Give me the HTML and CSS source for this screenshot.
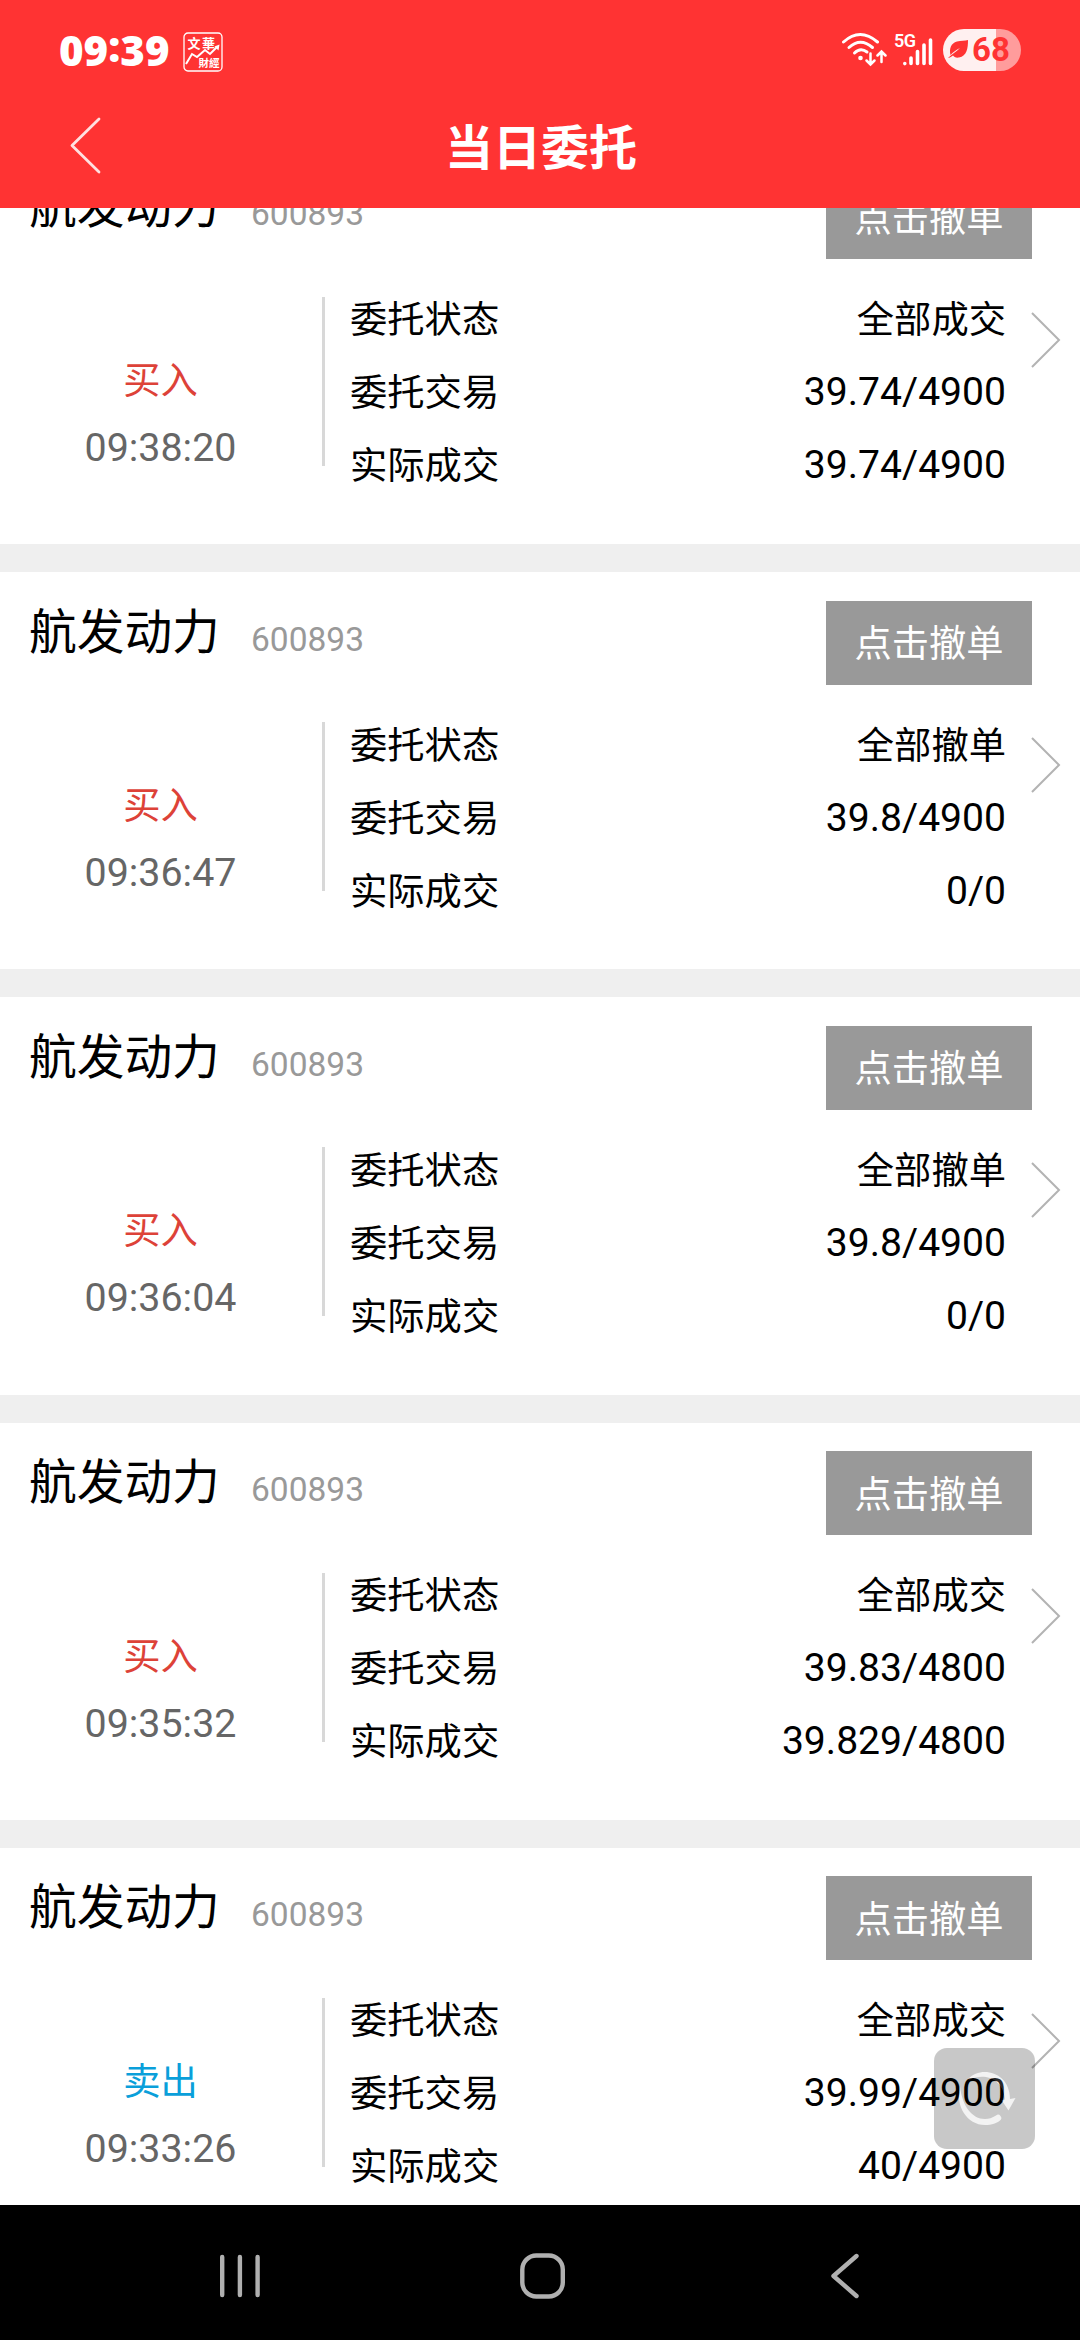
FILE: index.html
```html
<!DOCTYPE html>
<html lang="zh-CN">
<head>
  <meta charset="UTF-8">
  <title>当日委托</title>
  <link rel="stylesheet" href="styles.css">
</head>
<body>
  <header>
    <div class="status-bar">
      <span class="clock">09<span class="colon">:</span>39</span>
      <svg class="app-icon" width="40" height="40" viewBox="0 0 40 40">
        <rect x="1" y="1" width="38" height="38" rx="4" fill="none" stroke="#fff" stroke-width="1.3"/>
        <text x="4.5" y="15.5" font-size="13">文</text>
        <text x="19" y="15.5" font-size="13">華</text>
        <text x="15.5" y="34.5" font-size="10.5">財經</text>
        <path d="M3 32 L9 22 L14 25 L22 18 L27 22 L34 15" fill="none" stroke="#fff" stroke-width="2"/>
        <path d="M36.5 12.500 L31.500 14.500 L35.500 18.500 Z" fill="#fff"/>
      </svg>
      <div class="status-right">
        <svg class="wifi" width="46" height="36" viewBox="0 0 46 36" fill="none" stroke="#fff" stroke-linecap="round">
          <path d="M2.5 10 Q19 -5 36.5 10" stroke-width="3"/>
          <path d="M8 15.5 Q19.5 5 31.5 15.5" stroke-width="3"/>
          <path d="M13.5 21 Q19.5 15 26 20" stroke-width="3"/>
          <circle cx="19.5" cy="26" r="2.3" fill="#fff" stroke="none"/>
          <path d="M29.5 21.5 V32 M25.5 28.5 L29.5 32.5 L33.5 28.5" stroke-width="2.5"/>
          <path d="M40.5 30 V20 M36.5 23.5 L40.5 19.5 L44.5 23.5" stroke-width="2.5"/>
        </svg>
        <svg class="signal" width="40" height="36" viewBox="0 0 40 36" fill="none" stroke="#fff" stroke-width="3.6" stroke-linecap="round">
          <text x="0" y="14.5" font-size="18" stroke="none" textLength="22">5G</text>
          <path d="M10.8 31.5 V31.6 M17 26 V31.5 M23.5 19.5 V31.5 M30 13 V31.5 M36.5 8 V31.5"/>
        </svg>
        <div class="battery">
          <svg width="22" height="22" viewBox="0 0 22 22">
            <path d="M21 1 C21 9 20 17 12 18.500 C9 19 7 18 6 16.500 C4 18 2.500 18.800 1 19 C5 15 9 13 13 9 C9 11 6 13 3.500 16 C2 10 4 4 10 2.500 C14 1.500 18 2 21 1 Z" fill="#f33"/>
          </svg>
          <span>68</span>
        </div>
      </div>
    </div>
    <div class="title-bar">
      <svg class="back" width="34" height="58" viewBox="0 0 34 58">
        <path d="M31 2 L4 28.5 L31 55" fill="none" stroke="#fff" stroke-width="2.8" stroke-linecap="round" stroke-linejoin="round" opacity="0.85"/>
      </svg>
      <h1>当日委托</h1>
    </div>
  </header>

  <main>
    <section class="order">
      <div class="order-head">
        <h2>航发动力</h2>
        <span class="code">600893</span>
        <button>点击撤单</button>
      </div>
      <div class="order-body">
        <div class="side">
          <p class="buy">买入</p>
          <p class="time">09:38:20</p>
        </div>
        <dl>
          <dt>委托状态</dt><dd class="cn">全部成交</dd>
          <dt>委托交易</dt><dd>39.74/4900</dd>
          <dt>实际成交</dt><dd>39.74/4900</dd>
        </dl>
        <svg class="more" width="32" height="58" viewBox="0 0 32 58"><path d="M2 2 L29 29 L2 56"/></svg>
      </div>
    </section>

    <section class="order">
      <div class="order-head">
        <h2>航发动力</h2>
        <span class="code">600893</span>
        <button>点击撤单</button>
      </div>
      <div class="order-body">
        <div class="side">
          <p class="buy">买入</p>
          <p class="time">09:36:47</p>
        </div>
        <dl>
          <dt>委托状态</dt><dd class="cn">全部撤单</dd>
          <dt>委托交易</dt><dd>39.8/4900</dd>
          <dt>实际成交</dt><dd>0/0</dd>
        </dl>
        <svg class="more" width="32" height="58" viewBox="0 0 32 58"><path d="M2 2 L29 29 L2 56"/></svg>
      </div>
    </section>

    <section class="order">
      <div class="order-head">
        <h2>航发动力</h2>
        <span class="code">600893</span>
        <button>点击撤单</button>
      </div>
      <div class="order-body">
        <div class="side">
          <p class="buy">买入</p>
          <p class="time">09:36:04</p>
        </div>
        <dl>
          <dt>委托状态</dt><dd class="cn">全部撤单</dd>
          <dt>委托交易</dt><dd>39.8/4900</dd>
          <dt>实际成交</dt><dd>0/0</dd>
        </dl>
        <svg class="more" width="32" height="58" viewBox="0 0 32 58"><path d="M2 2 L29 29 L2 56"/></svg>
      </div>
    </section>

    <section class="order">
      <div class="order-head">
        <h2>航发动力</h2>
        <span class="code">600893</span>
        <button>点击撤单</button>
      </div>
      <div class="order-body">
        <div class="side">
          <p class="buy">买入</p>
          <p class="time">09:35:32</p>
        </div>
        <dl>
          <dt>委托状态</dt><dd class="cn">全部成交</dd>
          <dt>委托交易</dt><dd>39.83/4800</dd>
          <dt>实际成交</dt><dd>39.829/4800</dd>
        </dl>
        <svg class="more" width="32" height="58" viewBox="0 0 32 58"><path d="M2 2 L29 29 L2 56"/></svg>
      </div>
    </section>

    <section class="order">
      <div class="order-head">
        <h2>航发动力</h2>
        <span class="code">600893</span>
        <button>点击撤单</button>
      </div>
      <div class="order-body">
        <div class="side">
          <p class="sell">卖出</p>
          <p class="time">09:33:26</p>
        </div>
        <dl>
          <dt>委托状态</dt><dd class="cn">全部成交</dd>
          <dt>委托交易</dt><dd>39.99/4900</dd>
          <dt>实际成交</dt><dd>40/4900</dd>
        </dl>
        <svg class="more" width="32" height="58" viewBox="0 0 32 58"><path d="M2 2 L29 29 L2 56"/></svg>
      </div>
    </section>

    <div class="refresh">
      <svg width="101" height="101" viewBox="0 0 101 101" fill="#c8c8c8">
        <path d="M26 38 C21 58 33 77 51 77 C58 77 63 75 66 72.500 A3.200 3.200 0 0 0 62 67.500 C58 70 55 71 51 71 C38 71 28 58 26 38 Z"/>
        <path d="M34 31 C47 17 76 24 76 51 L81.500 50 L74.500 62.500 L67.500 52 L71 51.500 C69 30 50 25 36 31.500 A1.500 1.500 0 0 1 34 31 Z"/>
      </svg>
    </div>
  </main>

  <nav>
    <svg width="44" height="50" viewBox="0 0 44 50"><path d="M4.2 6 V44 M21.9 6 V44 M39.6 6 V44"/></svg>
    <svg width="50" height="50" viewBox="0 0 50 50"><rect x="4.3" y="4.5" width="40.5" height="41" rx="14"/></svg>
    <svg width="44" height="50" viewBox="0 0 44 50"><path d="M33.5 5 L10.5 25 L33.5 45"/></svg>
  </nav>
</body>
</html>
```
FILE: styles.css
```css
* {
  box-sizing: border-box;
  margin: 0;
  padding: 0;
}
body {
  width: 1080px;
  height: 2340px;
  display: flex;
  flex-direction: column;
  overflow: hidden;
  background: #efefef;
  color: #000;
  font-family: Roboto, "Noto Sans CJK SC", sans-serif;
}
header {
  height: 208px;
  flex: none;
  background: #f33;
  color: #fff;
}

/* status bar */
.status-bar {
  height: 100px;
  padding: 0 59px 0 59px;
  display: flex;
  align-items: center;
}
.clock {
  width: 124px;
  font: 800 42px/100px "Open Sans", sans-serif;
}
.colon {
  line-height: 1;
  vertical-align: 4px;
}
.app-icon {
  margin-top: 3px;
  fill: #fff;
  font-family: "Noto Sans CJK TC", sans-serif;
  font-weight: bold;
}
.status-right {
  margin-left: auto;
  display: flex;
  align-items: center;
}
.wifi {
  margin-right: 7px;
}
.signal {
  margin-right: 9px;
}
.signal text {
  fill: #fff;
  font-weight: 600;
}
.battery {
  width: 78px;
  height: 42px;
  padding-left: 4px;
  display: flex;
  align-items: center;
  gap: 3px;
  border-radius: 21px;
  background: linear-gradient(90deg, #fff0f0 53px, #ff9c9c 53px);
  color: #f33;
  font: 700 33px/42px Roboto, sans-serif;
}

.title-bar {
  height: 108px;
  display: grid;
  grid-template-columns: 101px 1fr 99px;
  align-items: center;
}
.back {
  margin: -16px 0 0 68px;
}
h1 {
  margin-top: -11px;
  text-align: center;
  font-size: 48px;
  line-height: 70px;
  font-weight: 700;
}

/* order list, scrolled part way into the first card */
main {
  flex: 1;
  min-height: 0;
  overflow: hidden;
  position: relative;
}
.order {
  height: 397.33px;
  margin-bottom: 28px;
  background: #fff;
}
.order:first-child {
  margin-top: -61.33px;
}
.order-head {
  height: 150px;
  padding: 28.5px 48px 0 29px;
  display: flex;
}
h2 {
  width: 222px;
  font-size: 47.7px;
  line-height: 65px;
  font-weight: 400;
}
.code {
  color: #999;
  font-size: 33.5px;
  line-height: 77px;
}
button {
  width: 206px;
  height: 84px;
  margin-left: auto;
  padding-bottom: 3px;
  border: none;
  background: #999;
  color: #fff;
  font-family: inherit;
  font-size: 37.3px;
}
.order-body {
  display: flex;
}
.side {
  width: 325px;
  height: 169px;
  padding: 54px 1px 0 0;
  border-right: 3px solid #d8d8d8;
  text-align: center;
}
.side p {
  font-size: 37.3px;
  line-height: 60px;
}
.side .time {
  margin-top: 7px;
  color: #666;
  font-size: 39.4px;
}
.buy {
  color: #dd4238;
}
.sell {
  color: #0a9fda;
}
dl {
  width: 681px;
  padding-left: 25px;
  margin-top: -16px;
  display: grid;
  grid-template-columns: 1fr auto;
  grid-auto-rows: 73px;
  align-items: center;
  font-size: 37.3px;
}
dd {
  padding-top: 4px;
  font-size: 39.1px;
  text-align: right;
}
dd.cn {
  padding-top: 0;
  font-size: 37.3px;
}
.more {
  margin: 14px 0 0 24px;
  fill: none;
  stroke: #b3b3b3;
  stroke-width: 2;
}

/* floats over the list */
.refresh {
  position: absolute;
  right: 45px;
  bottom: 56px;
  width: 101px;
  height: 101px;
  border-radius: 13px;
  background: #000;
  opacity: 0.21;
}

nav {
  height: 135px;
  flex: none;
  padding: 6px 213px 0 218px;
  display: flex;
  justify-content: space-between;
  align-items: center;
  background: #000;
}
nav svg {
  fill: none;
  stroke: #b0b0b0;
  stroke-width: 4.4;
  stroke-linecap: round;
  stroke-linejoin: round;
}
```
